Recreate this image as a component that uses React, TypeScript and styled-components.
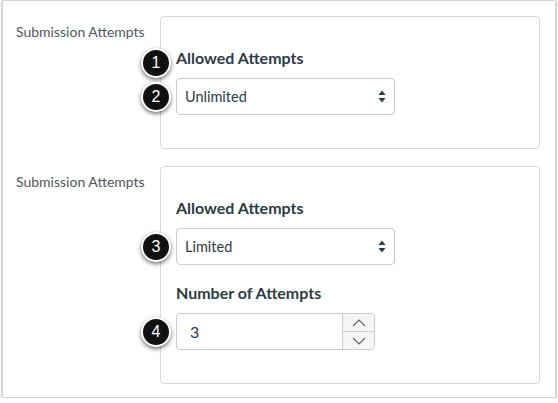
import React from "react";
import styled, { createGlobalStyle } from "styled-components";

const GlobalStyle = createGlobalStyle`
  body {
    margin: 0;
    background: #ffffff;
    font-family: Lato, "Open Sans", sans-serif;
  }
`;

const App = () => {
  return (
    <>
      <GlobalStyle />
      <Frame>
        <Row>
          <RowLabel>Submission Attempts</RowLabel>
          <FieldBox>
            <Annotated>
              <Badge>1</Badge>
              <FieldTitle>Allowed Attempts</FieldTitle>
            </Annotated>
            <Annotated>
              <Badge>2</Badge>
              <Select value='Unlimited' />
            </Annotated>
          </FieldBox>
        </Row>
        <Row>
          <RowLabel>Submission Attempts</RowLabel>
          <FieldBox>
            <FieldTitle>Allowed Attempts</FieldTitle>
            <Annotated>
              <Badge>3</Badge>
              <Select value='Limited' />
            </Annotated>
            <FieldTitle spaced>Number of Attempts</FieldTitle>
            <Annotated>
              <Badge>4</Badge>
              <NumberInput>
                <NumberValue>3</NumberValue>
                <Spinner>
                  <SpinButton>
                    <Chevron up />
                  </SpinButton>
                  <SpinButton>
                    <Chevron />
                  </SpinButton>
                </Spinner>
              </NumberInput>
            </Annotated>
          </FieldBox>
        </Row>
      </Frame>
    </>
  );
};

export default App;

const Select = ({ value }: { value: string }) => (
  <SelectBox>
    <span>{value}</span>
    <svg width='8' height='13' viewBox='0 0 8 13'>
      <path d='M4 0.5 L7.5 5 L0.5 5 Z' fill='#2d3b45' />
      <path d='M4 12.5 L7.5 8 L0.5 8 Z' fill='#2d3b45' />
    </svg>
  </SelectBox>
);

const Chevron = ({ up }: { up?: boolean }) => (
  <svg width='14' height='8' viewBox='0 0 14 8'>
    <path
      d={up ? "M1 7 L7 1 L13 7" : "M1 1 L7 7 L13 1"}
      fill='none'
      stroke='#5a6268'
      strokeWidth='1.1'
    />
  </svg>
);

const Frame = styled.div`
  box-sizing: border-box;
  margin-left: 2px;
  width: 554px;
  height: 398px;
  border: 1px solid #d4d4d4;
  box-shadow: 0 1px 2px rgba(0, 0, 0, 0.45);
  padding: 15px 0 13px 13px;
  display: flex;
  flex-direction: column;
  gap: 17px;
`;

const Row = styled.div`
  display: flex;
  align-items: flex-start;
`;

const RowLabel = styled.div`
  width: 144px;
  padding-top: 7px;
  font-size: 14px;
  line-height: 17px;
  color: #4f575c;
`;

const FieldBox = styled.div`
  box-sizing: border-box;
  width: 380px;
  border: 1px solid #d8dbdd;
  border-radius: 4px;
  padding: 30px 0 33px 15px;
  display: flex;
  flex-direction: column;
  align-items: flex-start;
`;

const Annotated = styled.div`
  position: relative;
`;

const Badge = styled.div`
  position: absolute;
  left: -35px;
  top: 50%;
  transform: translateY(-50%);
  box-sizing: border-box;
  width: 30px;
  height: 30px;
  border-radius: 50%;
  background: #111111;
  border: 2px solid #ffffff;
  box-shadow: 0 2px 4px rgba(0, 0, 0, 0.55);
  color: #ffffff;
  font-family: "Liberation Sans", Arial, sans-serif;
  font-size: 16px;
  display: flex;
  align-items: center;
  justify-content: center;
  z-index: 2;
`;

const FieldTitle = styled.div<{ spaced?: boolean }>`
  font-size: 16px;
  font-weight: 700;
  line-height: 21px;
  color: #2d3b45;
  margin-top: ${(p) => (p.spaced ? "17px" : "0")};
  margin-bottom: 10px;
`;

const SelectBox = styled.div`
  box-sizing: border-box;
  width: 219px;
  height: 37px;
  border: 1px solid #c7cdd1;
  border-radius: 4px;
  background: #ffffff;
  padding: 0 8px 0 8px;
  display: flex;
  align-items: center;
  justify-content: space-between;
  font-size: 14.5px;
  color: #2d3b45;
`;

const NumberInput = styled.div`
  box-sizing: border-box;
  width: 199px;
  height: 37px;
  border: 1px solid #c7cdd1;
  border-radius: 4px;
  background: #ffffff;
  display: flex;
  overflow: hidden;
`;

const NumberValue = styled.div`
  flex: 1;
  display: flex;
  align-items: center;
  padding-left: 13px;
  font-size: 16px;
  color: #2d3b45;
`;

const Spinner = styled.div`
  width: 31px;
  border-left: 1px solid #c7cdd1;
  background: #f5f5f5;
  display: flex;
  flex-direction: column;
`;

const SpinButton = styled.div`
  flex: 1;
  display: flex;
  align-items: center;
  justify-content: center;

  & + & {
    border-top: 1px solid #c7cdd1;
  }
`;
